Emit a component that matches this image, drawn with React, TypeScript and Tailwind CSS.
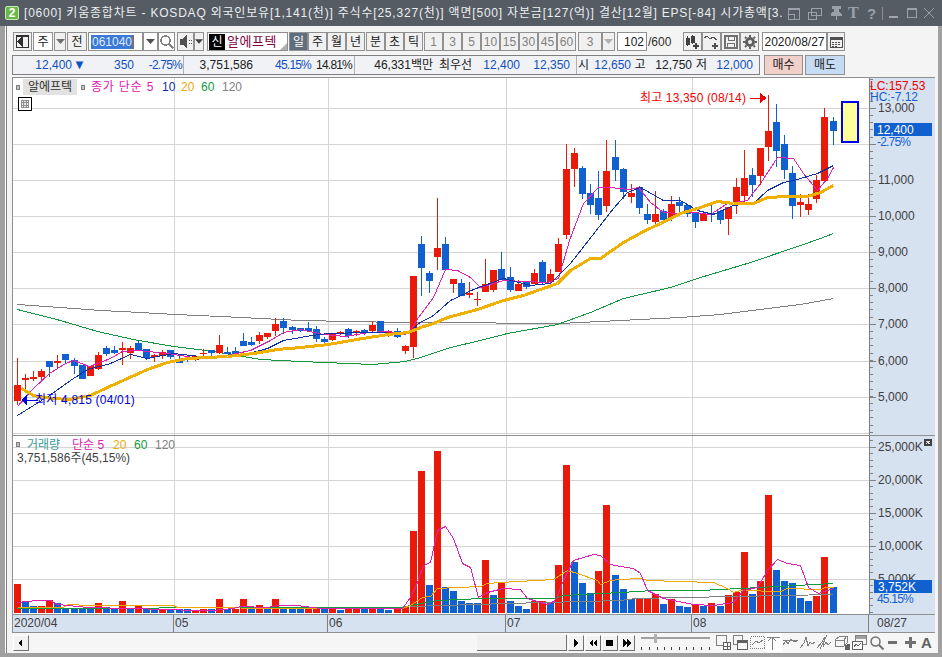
import React from "react";

const R = "#ea1a0a";
const B = "#1060d0";

// hi, bodyTop, bodyBottom, lo, red(1)/blue(0)
const candles: number[][] = [
  [358,385,401,405,1],[374,378,380,392,1],[371,377,379,381,1],[369,371,377,381,1],[361,361,367,377,0],[355,361,363,369,1],
  [354,354,360,363,0],[358,360,366,374,0],[365,365,379,379,0],[366,366,376,376,1],[352,355,369,370,1],[346,348,354,356,0],
  [346,350,353,354,0],[342,348,350,365,1],[346,348,353,359,1],[340,343,350,351,0],[349,349,358,360,0],[354,355,357,362,1],
  [350,352,356,359,1],[350,350,357,359,0],[356,359,363,363,0],[357,359,360,362,0],[355,356,360,361,1],[349,353,354,356,1],
  [350,350,353,357,0],[335,345,353,354,1],[347,352,354,354,0],[347,351,354,356,0],[333,341,346,346,0],[337,342,345,346,0],
  [332,335,341,344,1],[333,333,337,339,1],[318,324,331,336,1],[318,321,328,334,0],[326,327,330,334,0],[328,328,331,332,0],
  [322,328,331,332,0],[326,329,339,342,0],[337,339,342,345,0],[333,333,340,341,1],[331,332,334,335,1],[328,329,336,338,0],
  [330,331,333,336,1],[329,330,332,335,0],[321,325,331,332,1],[321,321,333,333,0],[330,331,333,337,1],[328,331,337,338,0],
  [345,346,351,354,1],[276,276,347,358,1],[236,244,268,296,0],[271,273,281,293,0],[198,248,257,270,1],[237,244,270,270,0],
  [279,279,284,293,1],[279,283,296,296,0],[282,293,295,298,1],[292,299,300,306,1],[259,284,292,292,1],[270,270,290,292,1],
  [252,269,280,280,0],[267,277,290,292,0],[280,284,291,291,1],[282,282,287,289,0],[269,273,284,284,1],[260,262,283,284,0],
  [269,274,282,286,1],[238,244,272,272,1],[144,169,235,239,1],[148,153,169,187,1],[166,168,194,199,0],[184,193,205,214,0],
  [171,198,215,220,0],[140,171,206,212,1],[140,157,170,181,0],[168,169,192,199,0],[184,193,197,203,1],[186,187,208,214,0],
  [204,214,220,224,0],[191,214,222,224,1],[209,211,220,224,0],[196,204,218,221,1],[197,202,206,216,0],[205,205,214,217,0],
  [212,212,222,228,0],[212,214,221,221,1],[205,213,215,222,0],[210,211,220,224,0],[207,207,219,235,1],[178,187,203,214,1],
  [150,178,196,202,1],[168,175,185,197,0],[148,148,176,185,1],[95,131,147,161,1],[104,122,151,167,0],[135,144,170,179,0],
  [166,173,206,219,0],[194,202,205,217,1],[194,204,210,215,1],[175,180,199,203,1],[108,117,181,181,1],[117,121,131,145,0],
];

const volume: number[][] = [
  [584,1],[602,0],[606,0],[606,1],[600,1],[603,0],[609,0],[609,0],[609,0],[609,0],[603,1],[607,0],[609,0],[601,1],[609,0],[606,1],
  [609,0],[609,0],[609,1],[609,0],[609,0],[609,0],[611,1],[609,1],[609,0],[599,1],[609,0],[609,1],[599,1],[609,0],[605,1],[608,0],
  [599,1],[608,0],[609,0],[609,0],[608,1],[608,1],[608,0],[609,1],[610,0],[609,1],[609,1],[609,0],[608,1],[608,0],[610,0],[609,1],
  [607,1],[531,1],[471,1],[585,0],[451,1],[587,0],[591,0],[601,0],[603,0],[603,0],[560,1],[595,0],[582,1],[601,0],[606,0],[609,0],
  [601,1],[601,1],[602,0],[565,1],[465,1],[562,0],[583,0],[593,0],[571,1],[505,1],[575,0],[589,0],[599,0],[598,1],[598,1],[594,1],
  [604,0],[599,1],[606,0],[607,0],[604,1],[606,0],[603,1],[606,0],[595,1],[592,1],[552,1],[594,0],[581,1],[495,1],[570,0],[581,0],
  [583,0],[598,0],[601,0],[596,1],[557,1],[587,0],
];

const ma120 = "17,304 60,307 100,310 140,312 175,314 220,316 260,318 300,320 350,321 400,322 470,322 520,323 560,323 600,321 640,319 680,317 720,314 760,309 800,304 833,298";
const ma60 = "17,309 60,320 97,331 133,339 173,346 213,351 260,359 300,361 372,364 405,361 420,357 450,347 480,340 507,333 557,324 590,312 623,298 670,287 700,277 750,262 800,245 820,238 833,233";
const ma20 = "21,388 33,395 50,398 70,399 90,395 107,387 127,378 147,369 167,362 187,358 227,356 253,353 277,349 300,347 328,344 362,338 388,334 408,332 420,327 433,323 447,317 477,309 503,300 523,295 557,283 570,270 590,258 600,258 623,242 643,231 660,223 680,213 700,207 717,201 733,203 753,203 767,197 787,196 807,196 820,192 833,185";
const ma5 = "17,406 33,388 49,373 65,363 73,360 89,366 110,358 122,351 137,350 157,352 173,354 200,358 227,355 250,350 270,340 283,332 300,329 323,334 345,336 368,332 388,331 405,334 410,330 418,317 433,297 445,269 457,270 470,277 480,287 503,280 547,282 558,278 569,240 583,203 598,187 610,187 628,189 638,187 650,202 663,212 677,213 693,212 710,214 727,203 747,200 760,183 777,157 793,158 803,173 817,190 827,178 833,167";
const ma10 = "17,415 49,395 70,380 87,369 110,363 130,354 147,358 173,353 200,356 240,355 267,348 283,340 300,337 312,335 328,333 368,332 405,333 412,330 418,323 433,315 450,300 473,289 503,278 530,285 550,283 570,263 588,240 613,208 627,192 640,187 663,200 680,200 697,210 713,214 733,205 753,203 767,190 783,182 793,180 817,173 833,165";

const v5 = "17,602 37,600 50,600 57,604 87,607 167,609 193,610 213,610 233,608 240,606 267,607 277,605 297,605 320,608 402,608 410,597 417,582 423,565 430,562 437,530 445,526 453,538 462,563 470,567 478,597 487,592 503,588 520,589 527,598 547,604 555,600 563,580 573,560 593,554 600,555 610,564 620,566 633,568 640,573 647,590 663,598 693,604 713,605 733,602 743,590 757,587 767,570 777,559 787,563 800,565 808,587 818,593 833,588";
const v20 = "17,607 63,607 67,604 90,605 117,605 173,605 177,607 300,608 402,608 410,605 422,597 430,596 437,588 457,587 480,586 487,583 500,582 553,579 567,570 577,573 597,580 600,584 610,580 620,579 640,578 647,580 713,582 727,588 733,592 740,590 780,591 787,588 820,589 825,587 833,587";
const v60 = "17,608 300,607 402,607 410,605 437,600 482,598 553,598 563,595 620,592 653,590 700,590 740,588 833,583";
const v120 = "410,606 507,603 620,600 635,598 833,594";

const vGrid = [174, 328, 506, 692];
const pGrid = [108, 144, 180, 216, 252, 288, 324, 361, 397];
const qGrid = [447, 480, 513, 546, 579];
const xOf = (i: number) => Math.floor(17.5 + 8.075 * i);

function Ticks({ from, to, step, majors }: { from: number; to: number; step: number; majors: number[] }) {
  const out: React.ReactNode[] = [];
  for (let y = from; y < to; y += step) out.push(<rect key={y} x={869} y={Math.round(y)} width={4} height={1} fill="#808080" />);
  majors.forEach((y) => out.push(<rect key={"m" + y} x={869} y={y} width={7} height={1} fill="#808080" />));
  return <>{out}</>;
}

function Box({ w, children, className = "" }: { w: string; children?: React.ReactNode; className?: string }) {
  return (
    <div className={`${w} h-[19px] shrink-0 border border-[#909090] bg-[#f0f0f0] flex items-center justify-center ${className}`}>
      {children}
    </div>
  );
}

function Caret({ c = "#404040" }: { c?: string }) {
  return (
    <svg width="9" height="5" viewBox="0 0 9 5"><path d="M0 0h9L4.500 5z" fill={c} /></svg>
  );
}

function Glyph({ w = 16, h = 16, children }: { w?: number; h?: number; children: React.ReactNode }) {
  return (
    <svg width={w} height={h} viewBox={`0 0 ${w} ${h}`} fill="none" stroke="currentColor" shapeRendering="crispEdges">
      {children}
    </svg>
  );
}

function Toolbar() {
  return (
    <div className="flex items-center h-[19px] mt-[6px] pl-[1px] text-[#202020]">
      <Box w="w-[19px]" className="text-[#303030]">
        <Glyph w={13} h={13}>
          <path d="M0.500 0.500h12v12h-12zM6.500 0.500v12" />
          <path d="M5 3v7L1.500 6.500z" fill="currentColor" />
          <path d="M1 0h11v2H1z" fill="currentColor" stroke="none" />
        </Glyph>
      </Box>
      <Box w="w-[20px]" className="ml-[1px] bg-white">주</Box>
      <Box w="w-[12px]" className="ml-[1px]"><Caret c="#707070" /></Box>
      <Box w="w-[20px]" className="ml-[1px]">전</Box>
      <div className="ml-[1px] w-[55px] h-[19px] shrink-0 border border-[#909090] bg-white flex items-center pl-[2px]">
        <span className="bg-[#3b79d8] text-[#dfe9fb] px-[1px] leading-[14px] border-r border-[#c06000]">061040</span>
      </div>
      <Box w="w-[15px]" className="bg-white"><Caret c="#505050" /></Box>
      <Box w="w-[17px]" className="bg-white text-[#808080]">
        <Glyph w={14} h={14}>
          <circle cx="5.500" cy="5.500" r="4.500" strokeWidth="1.500" />
          <path d="M9 9l4.500 4.500" strokeWidth="2" />
        </Glyph>
      </Box>
      <Box w="w-[17px]" className="ml-[2px] text-[#505050]">
        <Glyph w={14} h={13}>
          <path d="M1 4h3l3-3v11L4 9H1z" fill="currentColor" />
          <path d="M10 5h1M10 8h1M12 5h1M12 8h1" />
        </Glyph>
      </Box>
      <Box w="w-[10px]"><Caret c="#404040" /></Box>
      <div className="ml-[3px] w-[81px] h-[19px] shrink-0 border border-[#909090] bg-white flex items-center relative">
        <span className="w-[16px] h-[16px] ml-[1px] bg-black text-white flex items-center justify-center text-[12px]">신</span>
        <span className="ml-[2px] text-[#800040] text-[13px] tracking-[0.5px]">알에프텍</span>
        <span className="absolute right-0 bottom-0 w-0 h-0 border-l-[7px] border-l-transparent border-b-[7px] border-b-[#b0b0b0]" />
      </div>
      <Box w="w-[19px]" className="ml-[1px] !bg-[#5f6d7c] text-white">일</Box>
      <Box w="w-[19px]">주</Box>
      <Box w="w-[19px]">월</Box>
      <Box w="w-[19px]">년</Box>
      <Box w="w-[19px]" className="ml-[1px]">분</Box>
      <Box w="w-[19px]">초</Box>
      <Box w="w-[19px]">틱</Box>
      <Box w="w-[19px]" className="ml-[1px] text-[#808080]">1</Box>
      <Box w="w-[19px]" className="text-[#808080]">3</Box>
      <Box w="w-[19px]" className="text-[#808080]">5</Box>
      <Box w="w-[19px]" className="text-[#808080]">10</Box>
      <Box w="w-[19px]" className="text-[#808080]">15</Box>
      <Box w="w-[19px]" className="text-[#808080]">30</Box>
      <Box w="w-[19px]" className="text-[#808080]">45</Box>
      <Box w="w-[19px]" className="text-[#808080]">60</Box>
      <Box w="w-[24px]" className="ml-[2px] text-[#808080]">3</Box>
      <Box w="w-[13px]"><Caret c="#b0b0b0" /></Box>
      <div className="ml-[2px] w-[30px] h-[19px] shrink-0 border border-[#909090] bg-white flex items-center justify-end pr-[2px]">102</div>
      <span className="ml-[1px] w-[32px] shrink-0 text-[#303030]">/600</span>
      <Box w="w-[19px]" className="ml-[3px] text-[#404040]">
        <Glyph w={15} h={14}>
          <path d="M1 3h3v6H1zM6 1h3v6H6z" fill="currentColor" />
          <path d="M2.500 1v10M7.500 0v9" />
          <path d="M11 8v6M8 11h6" strokeWidth="2" />
        </Glyph>
      </Box>
      <Box w="w-[19px]" className="text-[#505050]">
        <Glyph w={15} h={14}>
          <path d="M0 3l3-2 3 3 3-2 4 3" />
          <path d="M11 8v6M8 11h6" strokeWidth="2" />
        </Glyph>
      </Box>
      <Box w="w-[19px]" className="text-[#707070]">
        <Glyph w={14} h={14}>
          <path d="M1 1h12v12H1z" strokeWidth="1.500" />
          <path d="M4 1h6v4H4zM3.500 8h7v5h-7z" />
        </Glyph>
      </Box>
      <Box w="w-[19px]" className="text-[#606060]">
        <svg width="14" height="14" viewBox="0 0 14 14">
          <circle cx="7" cy="7" r="3.500" fill="none" stroke="currentColor" strokeWidth="3" />
          <path d="M7 0v14M0 7h14M2 2l10 10M12 2L2 12" stroke="currentColor" strokeWidth="2" strokeDasharray="2 10 2 0" />
        </svg>
      </Box>
      <div className="ml-[3px] w-[65px] h-[19px] shrink-0 border border-[#909090] bg-white flex items-center justify-center">2020/08/27</div>
      <Box w="w-[18px]" className="text-[#505050]">
        <Glyph w={13} h={12}>
          <path d="M0.500 1.500h12v10h-12z" />
          <path d="M1 1h11v3H1z" fill="currentColor" stroke="none" />
          <path d="M2 6h2M5 6h2M8 6h2M2 8h2M5 8h2M8 8h2M2 10h2M5 10h2" />
        </Glyph>
      </Box>
    </div>
  );
}

function QuoteRow() {
  const blue = "text-[#1050c0]";
  return (
    <div className="flex items-center h-[20px] mt-[4px] text-[#202020]">
      <div className="w-[748px] h-[20px] border-y border-x border-[#808080] bg-[#f0f2f5] flex whitespace-nowrap leading-[18px]">
        <div className="w-[171px] border-r border-[#b0b0b0] flex shrink-0">
          <span className={`w-[59px] text-right ${blue}`}>12,400</span>
          <span className={`w-[15px] text-center text-[13px] ${blue}`}>▼</span>
          <span className={`w-[47px] text-right ${blue}`}>350</span>
          <span className={`w-[48px] text-right tracking-[-0.8px] ${blue}`}>-2.75%</span>
        </div>
        <div className="w-[171px] border-r border-[#b0b0b0] flex shrink-0">
          <span className="w-[69px] text-right">3,751,586</span>
          <span className={`w-[58px] text-right tracking-[-0.8px] ${blue}`}>45.15%</span>
          <span className="w-[41px] text-right tracking-[-0.8px]">14.81%</span>
        </div>
        <div className="w-[222px] border-r border-[#b0b0b0] flex shrink-0">
          <span className="w-[78px] text-right">46,331백만</span>
          <span className="w-[37px] ml-[6px]">최우선</span>
          <span className={`w-[44px] text-right ${blue}`}>12,400</span>
          <span className={`w-[50px] text-right ${blue}`}>12,350</span>
        </div>
        <div className="flex-1 flex">
          <span className="w-[13px] text-center">시</span>
          <span className={`w-[41px] text-right ${blue}`}>12,650</span>
          <span className="w-[18px] text-center">고</span>
          <span className="w-[43px] text-right">12,750</span>
          <span className="w-[19px] text-center">저</span>
          <span className={`w-[42px] text-right ${blue}`}>12,000</span>
        </div>
      </div>
      <div className="ml-[4px] w-[39px] h-[20px] border border-[#909090] bg-[#f2d0ca] flex items-center justify-center">매수</div>
      <div className="ml-[2px] w-[40px] h-[20px] border border-[#909090] bg-[#c6dcf2] flex items-center justify-center">매도</div>
    </div>
  );
}

function PricePane() {
  return (
    <div className="relative flex h-[358px] border-t border-[#909090]">
      <svg width="857" height="357" viewBox="12 78 857 357" className="bg-white shrink-0">
        <g shapeRendering="crispEdges">
          <rect x="12" y="78" width="1" height="357" fill="#909090" />
          {pGrid.map((y) => <rect key={y} x="13" y={y} width="856" height="1" fill="#d4d4d4" />)}
          <rect x="13" y="433" width="856" height="1" fill="#d4d4d4" />
          {vGrid.map((x) => <rect key={x} x={x} y="78" width="1" height="357" fill="#d4d4d4" />)}
          <g transform="translate(0.5 0.5)">
            <polyline points={ma120} fill="none" stroke="#808080" strokeWidth="1" />
            <polyline points={ma60} fill="none" stroke="#109a40" strokeWidth="1" />
          </g>
          {candles.map((c, i) => {
            const x = xOf(i);
            const col = c[4] ? R : B;
            return (
              <g key={i} fill={col}>
                <rect x={x} y={c[0]} width="1" height={c[3] - c[0]} />
                <rect x={x - 3} y={c[1]} width="7" height={Math.max(1, c[2] - c[1])} />
              </g>
            );
          })}
          <g transform="translate(0.5 0.5)">
            <polyline points={ma5} fill="none" stroke="#e020b0" strokeWidth="1" />
            <polyline points={ma10} fill="none" stroke="#1030a8" strokeWidth="1" />
            <polyline points={ma20} fill="none" stroke="#f0b000" strokeWidth="3" />
          </g>
          <rect x="841.500" y="102" width="16" height="40" fill="#ffff99" stroke="#0000f0" strokeWidth="2" />
          <rect x="750" y="98" width="10" height="1" fill="#f00000" />
          <path d="M760 93l7 5-7 5z" fill="#f00000" />
          <rect x="24" y="400" width="14" height="1" fill="#0000e0" />
          <path d="M27 394l-6 6 6 6z" fill="#0000e0" />
        </g>
        <text x="640" y="102" fontSize="12" fill="#f00000" letterSpacing="0.15">최고 13,350 (08/14)</text>
        <text x="35" y="404" fontSize="12" fill="#0000e0" letterSpacing="0.2">최저 4,815 (04/01)</text>
      </svg>
      <svg width="66" height="357" viewBox="869 78 66 357" className="bg-[#d7e2f0] shrink-0">
        <g shapeRendering="crispEdges">
          <rect x="869" y="78" width="1" height="357" fill="#808080" />
          <Ticks from={79} to={434} step={7.2} majors={pGrid} />
          <rect x="874" y="123" width="58" height="13" fill={B} />
        </g>
        <g fontSize="12" fill="#404040">
          {[["13,000",108],["11,000",180],["10,000",216],["9,000",252],["8,000",288],["7,000",324],["6,000",361],["5,000",397]].map(([t, y]) => (
            <text key={t as string} x="878" y={(y as number) + 4}>{t}</text>
          ))}
        </g>
        <text x="870" y="90" fontSize="12" fill="#f00000">LC:157.53</text>
        <text x="870" y="101" fontSize="12" fill="#1060d0">HC:-7.12</text>
        <text x="877" y="134" fontSize="12" fill="#ffffff">12,400</text>
        <text x="877" y="146" fontSize="12" fill="#1060d0" letterSpacing="-0.8">-2.75%</text>
      </svg>

      <div className="absolute left-[4px] top-[1px] flex items-center h-[16px] whitespace-nowrap">
        <span className="w-[4px] h-[5px] border border-[#808080] bg-[#c0c0c0]" />
        <span className="ml-[3px] w-[54px] h-[16px] bg-[#e2e2e2] text-[#303030] flex items-center justify-center">알에프텍</span>
        <span className="ml-[4px] w-[4px] h-[5px] border border-[#808080] bg-[#c0c0c0]" />
        <span className="ml-[6px] w-[71px] text-[#e020b0] tracking-[0.8px]">종가 단순 5</span>
        <span className="w-[19px] text-[#1030a8]">10</span>
        <span className="w-[20px] text-[#f0a800]">20</span>
        <span className="w-[21px] text-[#109a40]">60</span>
        <span className="text-[#808080]">120</span>
      </div>
      <div className="absolute left-[6px] top-[19px] w-[14px] h-[14px] border border-black bg-white p-[2px]">
        <div className="w-full h-full bg-[#909090] grid grid-cols-3 grid-rows-3 gap-[1px] border border-[#909090]">
          <span className="bg-[#e8e8e8]" /><span className="bg-[#e8e8e8]" /><span className="bg-[#e8e8e8]" />
          <span className="bg-[#e8e8e8]" /><span className="bg-[#e8e8e8]" /><span className="bg-[#e8e8e8]" />
          <span className="bg-[#e8e8e8]" /><span className="bg-[#e8e8e8]" /><span className="bg-[#e8e8e8]" />
        </div>
      </div>
    </div>
  );
}

function VolumePane() {
  return (
    <div className="relative flex h-[179px] border-t border-[#909090]">
      <svg width="857" height="178" viewBox="12 436 857 178" className="bg-white shrink-0">
        <g shapeRendering="crispEdges">
          <rect x="12" y="436" width="1" height="178" fill="#909090" />
          {qGrid.map((y) => <rect key={y} x="13" y={y} width="856" height="1" fill="#d4d4d4" />)}
          {vGrid.map((x) => <rect key={x} x={x} y="436" width="1" height="178" fill="#d4d4d4" />)}
          {volume.map((v, i) => (
            <rect key={i} x={xOf(i) - 3} y={v[0]} width="7" height={613 - v[0]} fill={v[1] ? R : B} />
          ))}
          <g transform="translate(0.5 0.5)">
            <polyline points={v120} fill="none" stroke="#808080" strokeWidth="1" />
            <polyline points={v60} fill="none" stroke="#109a40" strokeWidth="1" />
            <polyline points={v20} fill="none" stroke="#f0a800" strokeWidth="1" />
            <polyline points={v5} fill="none" stroke="#e020b0" strokeWidth="1" />
          </g>
        </g>
      </svg>
      <svg width="66" height="178" viewBox="869 436 66 178" className="bg-[#d7e2f0] shrink-0">
        <g shapeRendering="crispEdges">
          <rect x="869" y="436" width="1" height="178" fill="#808080" />
          <Ticks from={440} to={613} step={6.6} majors={qGrid} />
          <rect x="924" y="439" width="8" height="7" fill="#404040" />
          <path d="M926 441l4 3M930 441l-4 3" stroke="#e0e0e0" fill="none" />
        </g>
        <g fontSize="12" fill="#404040">
          <text x="878" y="451">25,000K</text>
          <text x="878" y="484">20,000K</text>
          <text x="878" y="517">15,000K</text>
          <text x="878" y="550">10,000K</text>
          <text x="878" y="583">5,000K</text>
        </g>
        <rect x="874" y="580" width="58" height="13" fill={B} shapeRendering="crispEdges" />
        <text x="878" y="591" fontSize="12" fill="#ffffff">3,752K</text>
        <text x="877" y="603" fontSize="12" fill="#1060d0" letterSpacing="-0.8">45.15%</text>
      </svg>
      <div className="absolute left-[4px] top-[1px] flex items-center h-[15px] whitespace-nowrap">
        <span className="w-[4px] h-[5px] border border-[#808080] bg-[#c0c0c0]" />
        <span className="ml-[7px] w-[45px] text-[#3a9a9a]">거래량</span>
        <span className="w-[41px] text-[#e020b0]">단순 5</span>
        <span className="w-[21px] text-[#f0a800]">20</span>
        <span className="w-[21px] text-[#109a40]">60</span>
        <span className="text-[#808080]">120</span>
      </div>
      <div className="absolute left-[5px] top-[14px] text-[#404040] whitespace-nowrap">3,751,586주(45,15%)</div>
    </div>
  );
}

function AxisX() {
  return (
    <div className="flex h-[19px] border-t border-[#909090] bg-[#d7e2f0] text-[#404040] leading-[17px] border-b border-l">
      <div className="w-[161px] pl-[1px] border-r border-[#808080]">2020/04</div>
      <div className="w-[154px] pl-[1px] border-r border-[#808080]">05</div>
      <div className="w-[178px] pl-[1px] border-r border-[#808080]">06</div>
      <div className="w-[186px] pl-[1px] border-r border-[#808080]">07</div>
      <div className="w-[177px] pl-[1px] border-r border-[#808080]">08</div>
      <div className="flex-1 pl-[8px]">08/27</div>
    </div>
  );
}

function Play({ children }: { children: React.ReactNode }) {
  return (
    <div className="ml-[1px] w-[16px] h-[16px] bg-[#f2f2f2] border-r border-b border-[#707070] border-t border-l border-t-white border-l-white flex items-center justify-center text-black shrink-0">
      <svg width="10" height="8" viewBox="0 0 10 8" shapeRendering="crispEdges">{children}</svg>
    </div>
  );
}

function BottomBar() {
  const c = "text-[#808080]";
  return (
    <div className="flex items-center h-[19px] bg-[#f6f6f6]">
      <Play><path d="M6 0v8L2 4z" fill="#000" /></Play>
      <div className="flex-1" />
      <div className="w-[90px] h-[16px] bg-[#f0f0f0] border-b border-r border-[#707070] shrink-0" />
      <Play><path d="M3 0l4 4-4 4z" fill="#000" /></Play>
      <Play><path d="M5 0v8L1 4zM9 0v8L5 4z" fill="#000" /></Play>
      <Play><path d="M1 1h7v6H1z" fill="#000" /></Play>
      <Play><path d="M1 0l4 4-4 4zM5 0l4 4-4 4z" fill="#000" /></Play>
      <div className="w-[74px] ml-[5px] h-[19px] shrink-0">
        <svg width="74" height="19" viewBox="0 0 74 19" shapeRendering="crispEdges">
          <rect x="1" y="4" width="69" height="2" fill="#a0a0a0" />
          <rect x="14" y="1" width="3" height="9" fill="#b0b0b0" />
          {[1, 9, 17, 24, 31, 39, 46, 53, 61, 69].map((x) => <rect key={x} x={x} y="14" width="1" height="3" fill="#404040" />)}
        </svg>
      </div>
      <div className={`flex items-center h-[19px] w-[221px] shrink-0 ${c}`}>
        <span className="ml-[2px] flex"><Glyph w={15} h={15}><path d="M0.500 0.500h10v10h-10z" /><path d="M7.500 7.500h7v7h-7zM11 8v6M8 11h6" fill="#f6f6f6" stroke="#606060" /></Glyph></span>
        <span className="ml-[2px] flex"><Glyph w={15} h={15}><path d="M0.500 0.500h9v9h-9z" /><path d="M4.500 5.500h10v9h-10z" fill="#f6f6f6" stroke="#606060" /><path d="M5 6h9v2H5z" fill="#606060" stroke="none" /></Glyph></span>
        <span className="ml-[2px] flex"><Glyph w={15} h={15}><path d="M0.500 1.500h14v12h-14z" strokeDasharray="1 1" /><path d="M2 10l4-4 3 2 4-3" /></Glyph></span>
        <span className="ml-[1px] w-[16px] h-[19px] bg-white flex items-center justify-center"><Glyph w={14} h={14}><path d="M0 1h13M5.500 1v13M1 5l4-4 4 4" /></Glyph></span>
        <span className="ml-[1px] flex"><Glyph w={15} h={15}><path d="M0 10l3-4 2 3 3-5 3 3 3-1M0 5h15" /></Glyph></span>
        <span className="ml-[2px] flex"><Glyph w={15} h={15}><path d="M0 13l4-5 2-6 2 9 2-4 2 2 3-2" /></Glyph></span>
        <span className="ml-[2px] flex"><Glyph w={15} h={15}><path d="M0 13l5-6 3-5-2 10 3-5 2 3 3-3M3 14l7-14" /></Glyph></span>
        <span className="ml-[2px] flex"><Glyph w={16} h={15}><path d="M1 5l5-4h7v7l-3 3H1zM1 5h9v6M10 5l3-4" /><path d="M11 10h1v4h-1zM13 9h1v5h-1zM15 9h1v5h-1z" fill="#606060" stroke="#606060" /></Glyph></span>
        <span className="ml-[2px] flex"><Glyph w={15} h={15}><path d="M3.500 0.500h11v9h-11z" /><path d="M4 1h10v3H4z" fill="#a0a0a0" stroke="none" /><path d="M0.500 6.500h10v8h-10z" fill="#f6f6f6" stroke="#606060" /><path d="M2 12l2-3 2 2 3-3" stroke="#606060" /></Glyph></span>
        <span className="ml-[3px] flex text-[#707070]">
          <svg width="14" height="14" viewBox="0 0 14 14" fill="none" stroke="currentColor"><circle cx="5.500" cy="5.500" r="4.500" strokeWidth="1.500" /><path d="M9 9l4.500 4.500" strokeWidth="2" /></svg>
        </span>
        <span className="ml-[4px] w-[9px] h-[3px] bg-[#707070]" />
        <span className="ml-[8px] flex text-[#707070]">
          <svg width="11" height="11" viewBox="0 0 11 11"><path d="M4 0h3v4h4v3H7v4H4V7H0V4h4z" fill="currentColor" /></svg>
        </span>
        <span className="ml-[5px] text-[#606060] font-bold text-[15px] leading-none">A</span>
      </div>
    </div>
  );
}

function TitleIcons() {
  return (
    <div className="absolute right-[8px] top-[5px] flex items-center text-[#9aa1a8] bg-[#555c64]">
      <Glyph w={13} h={13}><path d="M0.500 1.500h11v11h-11zM0.500 7.500h6v5" /><path d="M1 1h10v2H1z" fill="currentColor" stroke="none" /></Glyph>
      <span className="ml-[7px] flex"><Glyph w={14} h={13}><path d="M3.500 1.500h10v7h-10zM0.500 5.500h8v7h-8z" /></Glyph></span>
      <span className="ml-[7px] flex"><Glyph w={14} h={14}><path d="M3 0h8v2H9v4l3 2v1H2V8l3-2V2H3z" fill="currentColor" /><path d="M7 9v5" /></Glyph></span>
      <span className="ml-[5px] w-[12px] text-[16px] leading-none font-bold font-['Liberation_Serif',serif]">T</span>
      <span className="ml-[7px] w-[10px] text-[15px] leading-none font-bold">?</span>
      <span className="ml-[5px] w-[1px] h-[13px] bg-[#8a9096]" />
      <span className="ml-[6px] w-[9px] h-[2px] bg-[#a0a6ac] mt-[8px]" />
      <span className="ml-[9px] flex"><Glyph w={10} h={10}><path d="M0.500 0.500h9v9h-9z" /><path d="M1 1h8v1H1z" fill="currentColor" stroke="none" /></Glyph></span>
      <span className="ml-[7px] flex"><svg width="10" height="10" viewBox="0 0 10 10" stroke="currentColor"><path d="M0 0l10 10M10 0L0 10" /></svg></span>
    </div>
  );
}

export default function App() {
  return (
    <div className="w-[942px] h-[657px] overflow-hidden flex flex-col bg-[#a0a0a0] text-[12px] leading-[16px] font-['Liberation_Sans','Noto_Sans_CJK_KR',sans-serif]">
      <div className="relative h-[26px] shrink-0 bg-[#555c64] flex items-center pl-[5px] text-[#eceef0] whitespace-nowrap overflow-hidden">
        <span className="w-[14px] h-[14px] rounded-[2px] bg-[#6ab74a] border border-[#c6e8b4] text-white font-bold flex items-center justify-center text-[12px]">2</span>
        <span className="ml-[5px] tracking-[0.8px]">[0600] 키움종합차트 - KOSDAQ 외국인보유[1,141(천)] 주식수[25,327(천)] 액면[500] 자본금[127(억)] 결산[12월] EPS[-84] 시가총액[3.</span>
        <TitleIcons />
      </div>
      <div className="flex-1 flex flex-col ml-[5px] mr-[4px] mb-[4px] border-l border-white min-h-0">
        <div className="flex-1 flex flex-col border-l border-[#808080] bg-[#f4f4f4] pl-[5px] min-h-0">
          <Toolbar />
          <QuoteRow />
          <div className="mt-[2px] w-[923px] flex flex-col">
            <PricePane />
            <VolumePane />
            <AxisX />
            <BottomBar />
          </div>
        </div>
      </div>
    </div>
  );
}
